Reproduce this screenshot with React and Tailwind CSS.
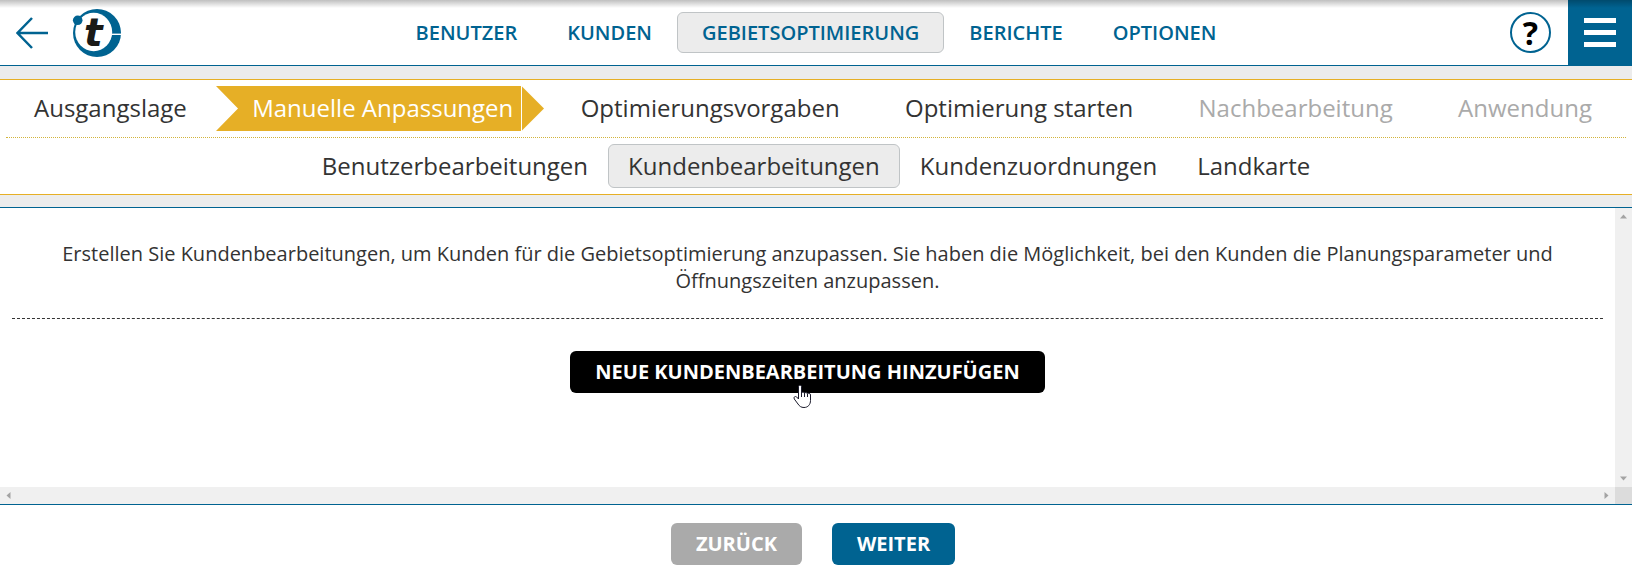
const mainNav = ['Benutzer', 'Kunden', 'Gebietsoptimierung', 'Berichte', 'Optionen'];

const steps = [
  { label: 'Ausgangslage' },
  { label: 'Manuelle Anpassungen', active: true },
  { label: 'Optimierungsvorgaben' },
  { label: 'Optimierung starten' },
  { label: 'Nachbearbeitung', disabled: true },
  { label: 'Anwendung', disabled: true },
];

const subSteps = ['Benutzerbearbeitungen', 'Kundenbearbeitungen', 'Kundenzuordnungen', 'Landkarte'];

function Logo() {
  return (
    <svg width="50" height="50" viewBox="0 0 50 50" role="img" aria-label="Startseite">
      <circle cx="25" cy="25" r="24" fill="#006391" />
      <ellipse cx="21.7" cy="24" rx="18.5" ry="19.2" fill="#fff" />
      <path d="M39.5 26.3H50" stroke="#fff" strokeWidth="1.4" />
      <circle cx="5.7" cy="12.3" r="4.8" fill="#006391" />
      <text x="12" y="38" fontSize="39" fontWeight="700" fontStyle="italic" fill="#1a1a18"
        fontFamily="'DejaVu Sans', sans-serif">t</text>
    </svg>
  );
}

function HandCursor() {
  return (
    <svg className="absolute top-[33px] left-[223px] pointer-events-none" width="19" height="25" viewBox="0 0 19 25" aria-hidden="true">
      <path d="M5.5 15V2.8c0-2 3-2 3 0V9c.4-1.400 2.700-1.300 3 .3.500-1.200 2.700-1 3 .6.600-1 3-.8 3 1.100v5.500c0 4-2.500 7-6.500 7-3 0-4.500-1.300-6-3.500L1.300 15c-1.100-1.800.8-3.200 2.300-2.100L5.500 15z"
        fill="#fff" stroke="#1b1b2b" strokeWidth="1" strokeLinejoin="round" />
      <path d="M8.500 8.500v4.500M11.500 9v4M14.500 10v3" stroke="#1b1b2b" strokeWidth="1" />
    </svg>
  );
}

function Arrow({ points, label }) {
  return (
    <button type="button" aria-label={label} className="flex size-[17px] items-center justify-center">
      <svg width="9" height="9" viewBox="0 0 9 9" aria-hidden="true">
        <polygon points={points} fill="#a3a3a3" />
      </svg>
    </button>
  );
}

function Step({ label, active, disabled }) {
  if (active) {
    return (
      <a href="#" aria-current="step" className="flex h-[45px] text-white">
        <svg width="22" height="45" viewBox="0 0 22 45" aria-hidden="true">
          <path d="M0 0H22V45H0L22 22.500Z" fill="#e6af26" />
        </svg>
        <span className="flex items-center bg-[#e6af26] pr-2 pb-0.5 pl-[14px]">{label}</span>
        <svg className="ml-px" width="22" height="45" viewBox="0 0 22 45" aria-hidden="true">
          <path d="M0 0.500L22 22.500L0 44.500Z" fill="#e6af26" />
        </svg>
      </a>
    );
  }
  return (
    <a href="#" aria-disabled={disabled}
      className={`flex h-[45px] items-center pr-[29px] pb-0.5 pl-9 first:pl-7 last:pr-[34px] ${disabled ? 'text-[#aaaaaa]' : ''}`}>
      {label}
    </a>
  );
}

export default function App() {
  const btnCls = 'h-[42px] rounded-md px-[25px] text-[20px] font-bold uppercase text-white';

  return (
    <div className="relative flex min-h-screen flex-col bg-white font-['Open_Sans',sans-serif] text-[#333333]">
      <div className="pointer-events-none absolute inset-x-0 top-0 h-2 bg-linear-to-b from-black/25 to-transparent" />

      <header className="flex h-[66px] items-center justify-between border-b border-[#006391]">
        <div className="flex w-[196px] items-center gap-6 pl-4">
          <a href="#" aria-label="Zurück zur Übersicht">
            <svg width="32" height="32" viewBox="0 0 32 32" fill="none" stroke="#006391" strokeWidth="2.500" aria-hidden="true">
              <path d="M32 16H2M16 1L1.500 16L16 31" />
            </svg>
          </a>
          <a href="#"><Logo /></a>
        </div>
        <nav className="flex items-center text-[20px] font-semibold text-[#006391] uppercase">
          {mainNav.map((item) => (
            <a key={item} href="#"
              className={`flex h-[41px] items-center rounded-md border px-6 ${item === 'Gebietsoptimierung' ? 'border-[#c0c4c6] bg-[#ececec]' : 'border-transparent'}`}>
              {item}
            </a>
          ))}
        </nav>
        <div className="flex w-[196px] items-center justify-end gap-[17px]">
          <button type="button" aria-label="Hilfe"
            className="flex size-[41px] items-center justify-center rounded-full border-2 border-[#006391] text-[32px] leading-none font-bold text-black">
            ?
          </button>
          <button type="button" aria-label="Menü" className="flex h-[65px] w-16 flex-col items-center justify-center gap-[7px] bg-[#006391]">
            <span className="h-[5px] w-8 bg-white" />
            <span className="h-[5px] w-8 bg-white" />
            <span className="h-[5px] w-8 bg-white" />
          </button>
        </div>
      </header>

      <div className="bg-[#ececec] pt-[13px] pb-3">
        <section className="border-y border-[#e6af26] bg-white px-[6px] text-[24px] whitespace-nowrap">
          <nav className="flex items-center justify-between border-b border-dotted border-[#d2b43c] py-[6px]">
            {steps.map((step) => <Step key={step.label} {...step} />)}
          </nav>
          <nav className="flex items-center justify-center py-[6px]">
            {subSteps.map((item) => (
              <a key={item} href="#"
                className={`flex h-[44px] items-center rounded-md border px-[19px] ${item === 'Kundenbearbeitungen' ? 'border-[#c0c4c6] bg-[#ececec]' : 'border-transparent'}`}>
                {item}
              </a>
            ))}
          </nav>
        </section>
      </div>

      <main className="grid flex-1 grid-cols-[1fr_17px] grid-rows-[1fr_17px] border-y border-[#006391] bg-white">
        <div className="flex flex-col items-center px-3 pt-8">
          <p className="px-9 text-center text-[20px] leading-[27px]">
            Erstellen Sie Kundenbearbeitungen, um Kunden für die Gebietsoptimierung anzupassen. Sie haben die
            Möglichkeit, bei den Kunden die Planungsparameter und Öffnungszeiten anzupassen.
          </p>
          <hr className="mt-6 mb-8 w-full border-t border-dashed border-[#333333]" />
          <div className="relative">
            <button type="button" className={`${btnCls} bg-black`}>Neue Kundenbearbeitung hinzufügen</button>
            <HandCursor />
          </div>
        </div>
        <div className="flex flex-col justify-between bg-[#f0f0f0]">
          <Arrow label="Nach oben" points="1,6.500 4.500,2.500 8,6.500" />
          <Arrow label="Nach unten" points="1,2.500 4.500,6.500 8,2.500" />
        </div>
        <div className="flex justify-between bg-[#f0f0f0]">
          <Arrow label="Nach links" points="6.500,1 2.500,4.500 6.500,8" />
          <Arrow label="Nach rechts" points="2.500,1 6.500,4.500 2.500,8" />
        </div>
        <div className="bg-[#dcdcdc]" />
      </main>

      <footer className="flex items-center justify-center gap-[30px] bg-white pt-[18px] pr-[6px] pb-[15px]">
        <button type="button" disabled className={`${btnCls} bg-[#aaaaaa]`}>Zurück</button>
        <button type="button" className={`${btnCls} bg-[#006391]`}>Weiter</button>
      </footer>
    </div>
  );
}
